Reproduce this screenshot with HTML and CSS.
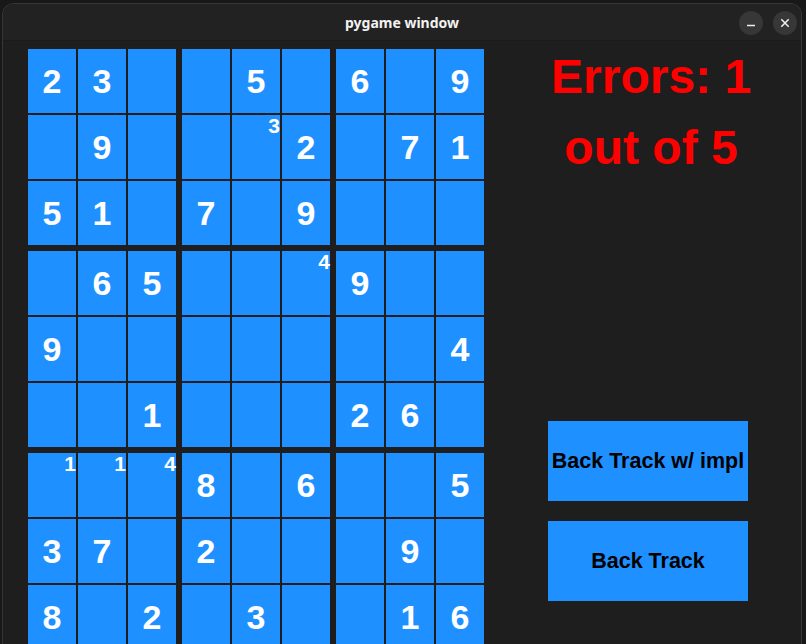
FILE: index.html
```html
<!DOCTYPE html>
<html>
<head>
<meta charset="utf-8">
<title>pygame window</title>
<link rel="stylesheet" href="styles.css">
</head>
<body>
<div class="window">
  <div class="titlebar">
    <div class="tb-spacer"></div>
    <div class="title">pygame window</div>
    <div class="controls">
      <div class="ctl"><svg width="24" height="24" viewBox="0 0 24 24"><line x1="8" y1="14.5" x2="16" y2="14.5" stroke="#ececec" stroke-width="1.6"/></svg></div>
      <div class="ctl"><svg width="24" height="24" viewBox="0 0 24 24"><path d="M8.3 8.3 L15.7 15.7 M15.7 8.3 L8.3 15.7" stroke="#ececec" stroke-width="1.6" fill="none"/></svg></div>
    </div>
  </div>
  <div class="content">
    <div class="board">
      <div class="box">
        <div class="cell">2</div><div class="cell">3</div><div class="cell"></div>
        <div class="cell"></div><div class="cell">9</div><div class="cell"></div>
        <div class="cell">5</div><div class="cell">1</div><div class="cell"></div>
      </div>
      <div class="box">
        <div class="cell"></div><div class="cell">5</div><div class="cell"></div>
        <div class="cell"></div><div class="cell"><span class="pencil">3</span></div><div class="cell">2</div>
        <div class="cell">7</div><div class="cell"></div><div class="cell">9</div>
      </div>
      <div class="box">
        <div class="cell">6</div><div class="cell"></div><div class="cell">9</div>
        <div class="cell"></div><div class="cell">7</div><div class="cell">1</div>
        <div class="cell"></div><div class="cell"></div><div class="cell"></div>
      </div>
      <div class="box">
        <div class="cell"></div><div class="cell">6</div><div class="cell">5</div>
        <div class="cell">9</div><div class="cell"></div><div class="cell"></div>
        <div class="cell"></div><div class="cell"></div><div class="cell">1</div>
      </div>
      <div class="box">
        <div class="cell"></div><div class="cell"></div><div class="cell"><span class="pencil">4</span></div>
        <div class="cell"></div><div class="cell"></div><div class="cell"></div>
        <div class="cell"></div><div class="cell"></div><div class="cell"></div>
      </div>
      <div class="box">
        <div class="cell">9</div><div class="cell"></div><div class="cell"></div>
        <div class="cell"></div><div class="cell"></div><div class="cell">4</div>
        <div class="cell">2</div><div class="cell">6</div><div class="cell"></div>
      </div>
      <div class="box">
        <div class="cell"><span class="pencil">1</span></div><div class="cell"><span class="pencil">1</span></div><div class="cell"><span class="pencil">4</span></div>
        <div class="cell">3</div><div class="cell">7</div><div class="cell"></div>
        <div class="cell">8</div><div class="cell"></div><div class="cell">2</div>
      </div>
      <div class="box">
        <div class="cell">8</div><div class="cell"></div><div class="cell">6</div>
        <div class="cell">2</div><div class="cell"></div><div class="cell"></div>
        <div class="cell"></div><div class="cell">3</div><div class="cell"></div>
      </div>
      <div class="box">
        <div class="cell"></div><div class="cell"></div><div class="cell">5</div>
        <div class="cell"></div><div class="cell">9</div><div class="cell"></div>
        <div class="cell"></div><div class="cell">1</div><div class="cell">6</div>
      </div>
    </div>
    <div class="panel">
      <div class="errors">Errors: 1<br>out of 5</div>
      <div class="btn btn-first">Back Track w/ impl</div>
      <div class="btn">Back Track</div>
    </div>
  </div>
</div>
</body>
</html>
```

FILE: styles.css
```css
html, body {
  margin: 0;
  padding: 0;
  height: 644px;
  overflow: hidden;
  background: #181818;
}
.window {
  margin: 3px 0 0 2px;
  width: 798px;
  height: 640px;
  border: 1px solid #363636;
  border-bottom: none;
  border-radius: 12px 12px 0 0;
  background: #1e1e1e;
  overflow: hidden;
}
.titlebar {
  height: 36px;
  background: #222222;
  border-bottom: 1px solid #1a1a1a;
  display: grid;
  grid-template-columns: 1fr auto 1fr;
  align-items: center;
}
.title {
  font-family: "Noto Sans", "DejaVu Sans", sans-serif;
  font-weight: 700;
  font-size: 14px;
  color: #f2f2f2;
  padding-top: 1px;
}
.controls {
  justify-self: end;
  display: flex;
  gap: 10px;
  padding-right: 4px;
  padding-top: 1px;
}
.ctl {
  width: 24px;
  height: 24px;
  border-radius: 50%;
  background: #373737;
}
.ctl svg { display: block; }
.content {
  display: flex;
  align-items: flex-start;
  background: #1e1e1e;
}
.board {
  margin: 8px 0 0 25px;
  display: grid;
  grid-template-columns: repeat(3, 148px);
  grid-template-rows: repeat(3, 196px);
  gap: 6px;
}
.box {
  display: grid;
  grid-template-columns: repeat(3, 48px);
  grid-template-rows: repeat(3, 64px);
  gap: 2px;
}
.cell {
  position: relative;
  background: #1e90ff;
  display: flex;
  align-items: center;
  justify-content: center;
  font-family: "Liberation Sans", Arial, sans-serif;
  font-weight: 700;
  font-size: 34px;
  line-height: 34px;
  color: #ffffff;
}
.pencil {
  position: absolute;
  top: 0;
  right: 0;
  font-size: 21px;
  line-height: 21px;
}
.panel {
  margin-left: 64px;
  width: 200px;
  display: flex;
  flex-direction: column;
}
.errors {
  margin-left: 3px;
  width: 200px;
  text-align: center;
  white-space: nowrap;
  font-family: "Liberation Sans", Arial, sans-serif;
  font-weight: 700;
  font-size: 48px;
  line-height: 71px;
  color: #ff0000;
}
.btn {
  height: 80px;
  background: #1e90ff;
  display: flex;
  align-items: center;
  justify-content: center;
  white-space: nowrap;
  font-family: "Liberation Sans", Arial, sans-serif;
  font-weight: 700;
  font-size: 21.5px;
  color: #000000;
  margin-top: 20px;
}
.btn-first {
  margin-top: 238px;
}
```
